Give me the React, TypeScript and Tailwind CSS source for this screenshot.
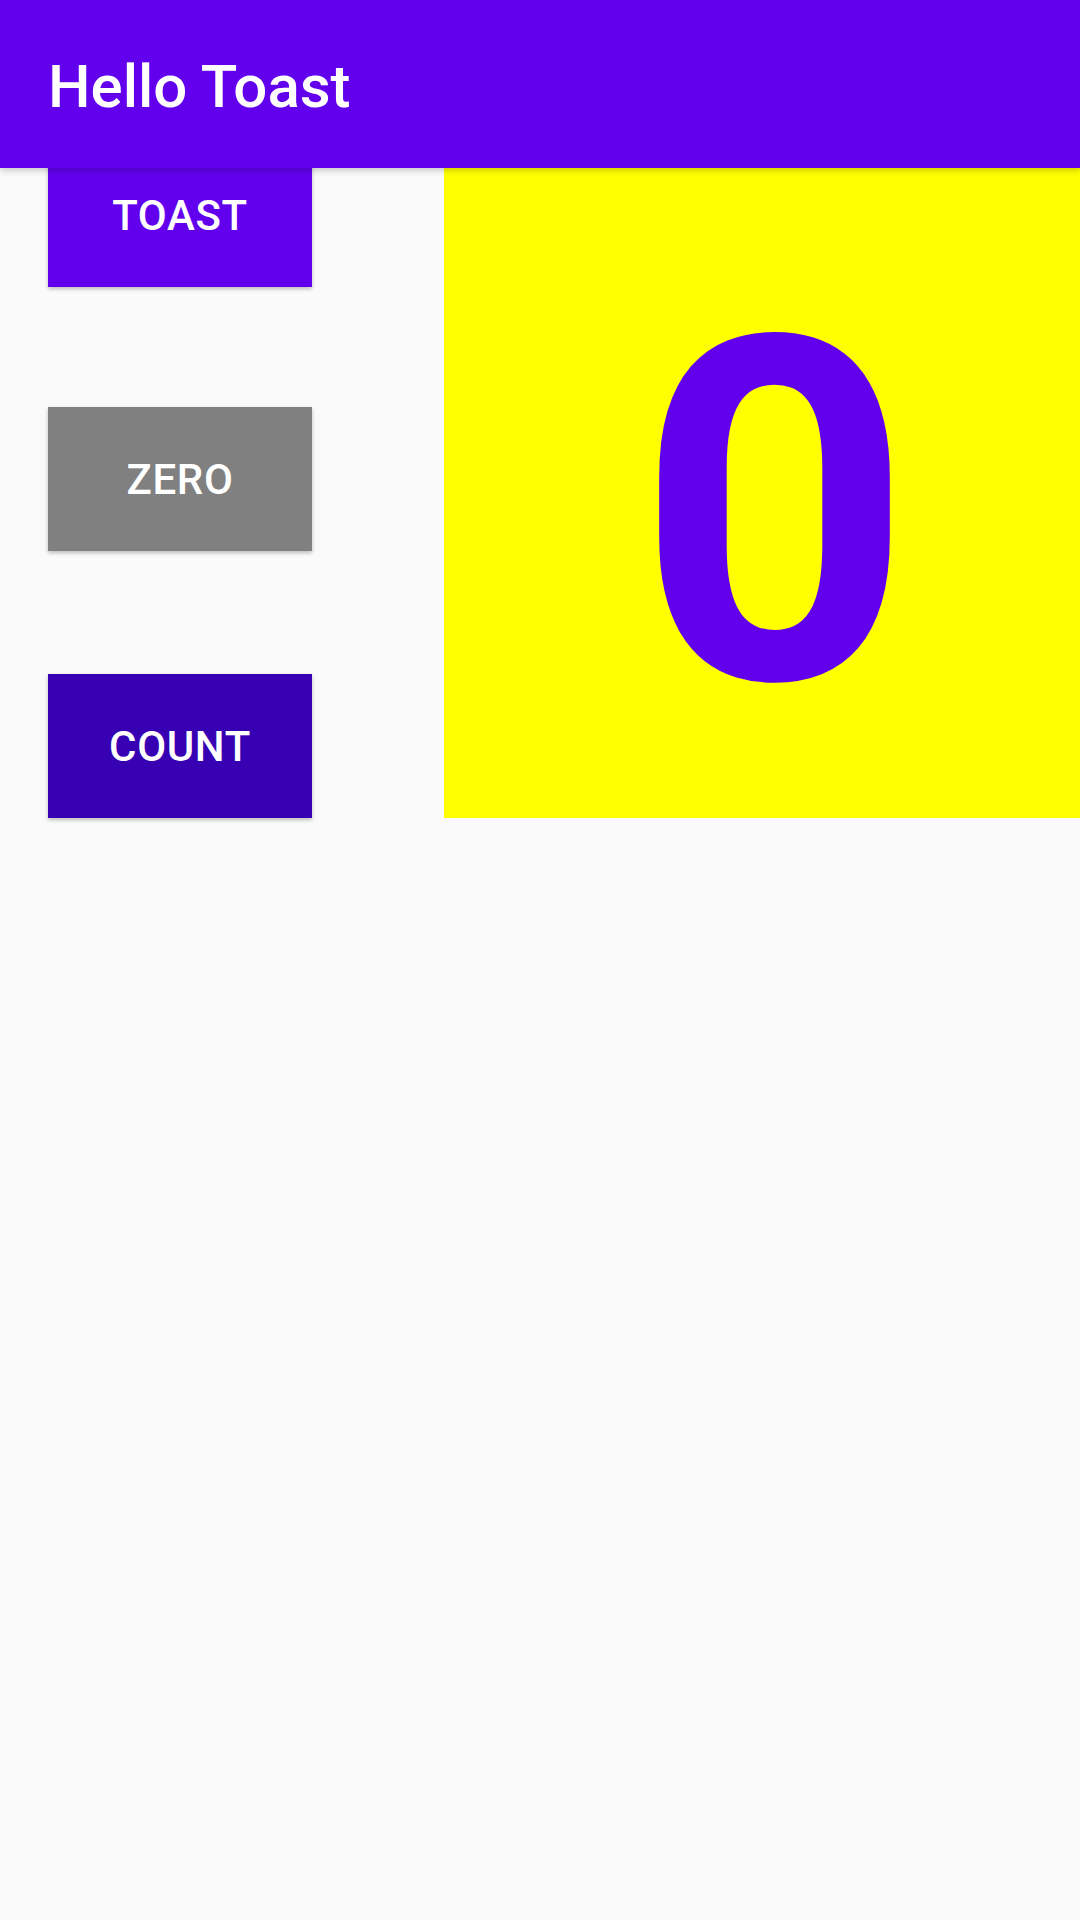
export default function App() {
  return (
    <div
      className="min-h-[1920px] w-[1080px] bg-[#fafafa] overflow-hidden"
      style={{ fontFamily: "Roboto, 'Noto Sans', sans-serif" }}
    >
      {/* App bar */}
      <header className="relative z-10 flex h-[168px] items-center bg-[#6200ee] pl-[48px] pt-[6px] shadow-[0_3px_6px_rgba(0,0,0,0.18)]">
        <h1 className="text-[60px] font-medium leading-none text-white">Hello Toast</h1>
      </header>

      <main className="flex">
        {/* Buttons column */}
        <div className="flex w-[444px] flex-col pl-[48px]">
          <button className="-mt-[25px] flex h-[144px] w-[264px] items-center justify-center bg-[#6200ee] text-[42px] font-medium tracking-[0.015em] text-white shadow-[0_2px_4px_rgba(0,0,0,0.25)]">
            TOAST
          </button>
          <button className="mt-[120px] flex h-[144px] w-[264px] items-center justify-center bg-[#808080] text-[42px] font-medium tracking-[0.015em] text-white shadow-[0_2px_4px_rgba(0,0,0,0.25)]">
            ZERO
          </button>
          <button className="mt-[123px] flex h-[144px] w-[264px] items-center justify-center bg-[#3700b3] text-[42px] font-medium tracking-[0.015em] text-white shadow-[0_2px_4px_rgba(0,0,0,0.25)]">
            COUNT
          </button>
        </div>

        {/* Counter */}
        <div className="flex h-[650px] flex-1 justify-center overflow-hidden bg-[#ffff00] pl-[25px] pt-[65px]">
          <span className="text-[480px] font-bold leading-[562px] text-[#6200ee]">0</span>
        </div>
      </main>
    </div>
  );
}
